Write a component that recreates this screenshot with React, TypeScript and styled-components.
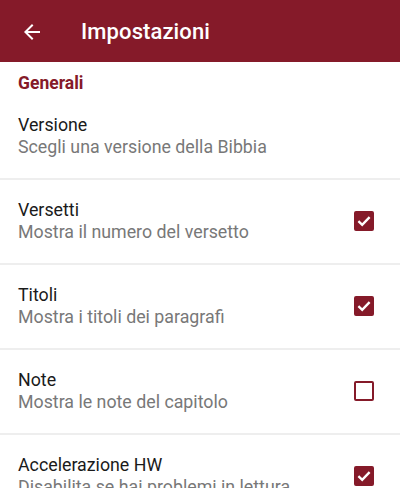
import React from "react";
import styled, { createGlobalStyle } from "styled-components";

const RED = "#851a29";

const Global = createGlobalStyle`
  html, body { margin: 0; padding: 0; background: #ffffff; }
  body { font-family: Roboto, "Noto Sans", Arial, sans-serif; -webkit-font-smoothing: antialiased; }
  * { box-sizing: border-box; }
`;

const Page = styled.div`
  width: 400px;
  height: 488px;
  overflow: hidden;
  display: flex;
  flex-direction: column;
  background: #fff;
`;

const Toolbar = styled.header`
  height: 62px;
  flex: none;
  background: ${RED};
  display: flex;
  align-items: center;
  padding-left: 20px;
  gap: 37px;
`;

const BackButton = styled.div`
  width: 24px;
  height: 24px;
  display: flex;
  align-items: center;
  justify-content: center;
  margin-top: 1px;
`;

const Title = styled.h1`
  margin: 0;
  color: #fff;
  font-size: 22px;
  font-weight: 500;
  letter-spacing: 0.1px;
`;

const Category = styled.div`
  padding: 10px 18px 1px;
  line-height: 22px;
  font-size: 17.5px;
  font-weight: 700;
  color: ${RED};
`;

const Row = styled.div<{ $divider?: boolean }>`
  display: flex;
  align-items: center;
  padding: 19px 26px 20px 18px;
  border-bottom: ${(p) => (p.$divider ? "2px solid #eeeeee" : "none")};
`;

const Texts = styled.div`
  flex: 1;
  display: flex;
  flex-direction: column;
  min-width: 0;
`;

const RowTitle = styled.div`
  font-size: 17.8px;
  line-height: 22px;
  color: #1a1a1a;
  white-space: nowrap;
`;

const RowSummary = styled.div`
  font-size: 17.8px;
  line-height: 22px;
  color: #787878;
  white-space: nowrap;
`;

const Box = styled.div<{ $checked: boolean }>`
  width: 20px;
  height: 20px;
  flex: none;
  border-radius: 2px;
  border: 2px solid ${RED};
  background: ${(p) => (p.$checked ? RED : "transparent")};
  display: flex;
  align-items: center;
  justify-content: center;
`;

function Check({ checked }: { checked: boolean }) {
  return (
    <Box $checked={checked}>
      {checked && (
        <svg width="16" height="16" viewBox="0 0 16 16">
          <path d="M2.4 8.2 L6.2 11.8 L13.6 4.2" fill="none" stroke="#fff" strokeWidth="2.4" />
        </svg>
      )}
    </Box>
  );
}

const items: { title: string; summary: string; check?: boolean }[] = [
  { title: "Versione", summary: "Scegli una versione della Bibbia" },
  { title: "Versetti", summary: "Mostra il numero del versetto", check: true },
  { title: "Titoli", summary: "Mostra i titoli dei paragrafi", check: true },
  { title: "Note", summary: "Mostra le note del capitolo", check: false },
  { title: "Accelerazione HW", summary: "Disabilita se hai problemi in lettura", check: true },
];

export default function App() {
  return (
    <Page>
      <Global />
      <Toolbar>
        <BackButton>
          <svg width="24" height="24" viewBox="0 0 24 24">
            <path fill="#fff" d="M20 11H7.83l5.59-5.59L12 4l-8 8 8 8 1.41-1.41L7.83 13H20v-2z" />
          </svg>
        </BackButton>
        <Title>Impostazioni</Title>
      </Toolbar>
      <Category>Generali</Category>
      {items.map((it, i) => (
        <Row key={it.title} $divider={i < items.length - 1}>
          <Texts>
            <RowTitle>{it.title}</RowTitle>
            <RowSummary>{it.summary}</RowSummary>
          </Texts>
          {it.check !== undefined && <Check checked={it.check} />}
        </Row>
      ))}
    </Page>
  );
}
